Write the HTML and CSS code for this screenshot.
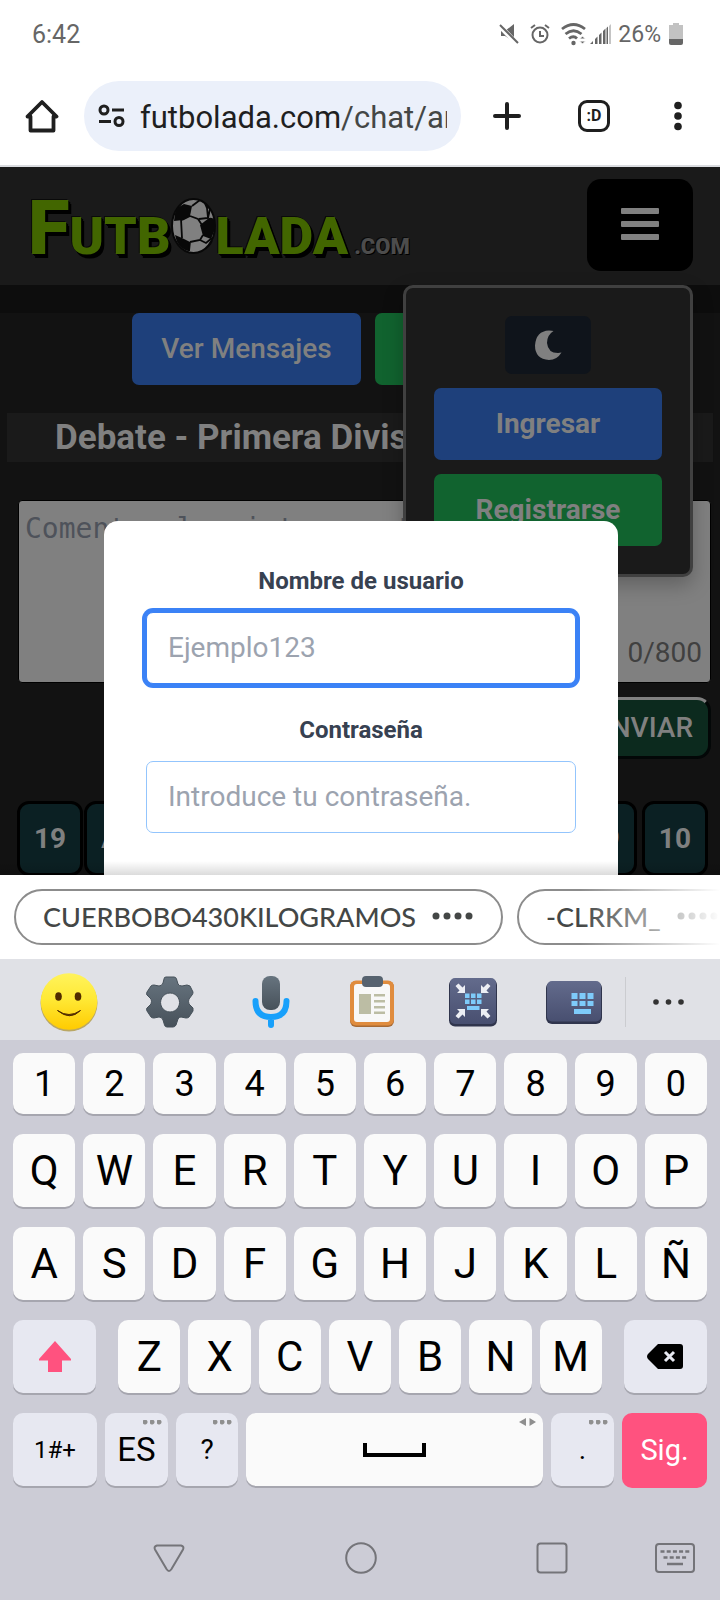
FILE: index.html
```html
<!DOCTYPE html>
<html lang="es">
<head>
<meta charset="utf-8">
<meta name="viewport" content="width=device-width, initial-scale=1">
<title>Futbolada</title>
<link rel="stylesheet" href="styles.css">
</head>
<body>
<div class="phone">
  <div class="status">
    <span class="clock">6:42</span>
    <div class="status-icons">
      <svg width="20" height="22" viewBox="0 0 20 22"><path d="M2 8h4l9-7v18l-9-6H2z" fill="#666"/><path d="M0 2l18 19" stroke="#fff" stroke-width="5"/><path d="M1 2l18 18" stroke="#666" stroke-width="2"/></svg>
      <svg class="alarm" width="20" height="22" viewBox="0 0 20 22" fill="none" stroke="#666" stroke-width="2"><circle cx="10" cy="12" r="7.5"/><path d="M10 8v5h4M1 5l4-3M19 5l-4-3"/></svg>
      <svg class="wifi" width="26" height="24" viewBox="0 0 26 24" fill="none" stroke="#666" stroke-width="2.8"><path d="M1 7q11.500-9 23 0M4.500 12q8-6.500 16 0M8 16.500q4.500-3.500 8 0"/><circle cx="12.500" cy="21" r="2.200" fill="#666" stroke="none"/><path d="M18.500 17l3-3 3 3zM18.500 19l3 3 3-3z" fill="#666" stroke="#fff" stroke-width="1"/></svg>
      <svg width="22" height="22" viewBox="0 0 22 22" fill="#666"><path d="M0 21l3-3v3zM5 21v-5l2.500-2.500V21zM9 21v-9l2.500-2.500V21zM13 21V8l2.500-2.500V21zM16.500 21V5L18 3.500V21z"/><path d="M19 21V3l2-2v20z" fill="#c4c4c4"/></svg>
      <span class="percent">26%</span>
      <svg class="battery" width="14" height="22" viewBox="0 0 14 22"><path d="M4 0h6v2h4v14H0V2h4z" fill="#c2c2c2"/><path d="M0 16h14v4q0 2-2 2H2q-2 0-2-2z" fill="#666"/></svg>
    </div>
  </div>

  <div class="browser">
    <button class="b-home" aria-label="Inicio"><svg width="34" height="34" viewBox="0 0 34 34" fill="none" stroke="#1f1f1f" stroke-width="3.800" stroke-linejoin="round"><path d="M2.500 17.500L17 3l14.500 14.500H28.500v14h-23v-14z"/></svg></button>
    <div class="url">
      <svg width="27" height="24" viewBox="0 0 27 24" fill="none" stroke="#1f1f1f" stroke-width="3"><circle cx="6" cy="6" r="4"/><path d="M14 6h12M1 17.500h12"/><circle cx="21" cy="17.500" r="4"/></svg>
      <span class="address">futbolada.com<span class="path">/chat/argentina</span></span>
    </div>
    <button class="b-new" aria-label="Nueva pestaña"><svg width="28" height="28" viewBox="0 0 28 28" stroke="#1f1f1f" stroke-width="4" stroke-linecap="round"><path d="M14 2v24M2 14h24"/></svg></button>
    <button class="b-tabs"><span class="tabs">:D</span></button>
    <button class="b-more" aria-label="Más"><svg width="8" height="30" viewBox="0 0 8 30" fill="#1f1f1f"><circle cx="4" cy="4.500" r="3.800"/><circle cx="4" cy="15" r="3.800"/><circle cx="4" cy="25.500" r="3.800"/></svg></button>
  </div>

  <div class="page">
    <header class="site-head">
      <a class="logo" href="#">
        <span class="logo-big">F</span><span class="logo-mid">UTB</span>
        <svg class="ball" width="45" height="56" viewBox="0 0 45 56"><ellipse cx="22.500" cy="28" rx="21.500" ry="27" fill="#808080" stroke="#080808" stroke-width="2"/><path d="M6 10l7-4 8 2-2 10-7 4-9 1q0-7 3-13z" fill="#080808"/><path d="M29 27l9-7q4-1 6 3v8l-4 10-8-3z" fill="#080808"/><path d="M4 37l7 3 8 4v9q-6 0-11-6-3-4-4-10z" fill="#080808"/><path d="M32 3l8 8-5-1zM34 52l5-7 3-2q-3 6-8 9z" fill="#080808"/><path d="M21 8l8-6M19 18l8 3 4 6M10 21l1 19M11 22l8-4M19 44l10-2 3-5M29 42l6 3 6-5M19 44l-1 9M28 21l9-1-1-10M37 20l2-9" fill="none" stroke="#080808" stroke-width="1.800"/></svg>
        <span class="logo-mid">LADA</span><span class="logo-com">.COM</span>
      </a>
      <button class="burger" aria-label="Menú"><svg width="38" height="33" viewBox="0 0 38 33" fill="#808080"><rect width="38" height="6" rx="1"/><rect y="13" width="38" height="6" rx="1"/><rect y="26" width="38" height="6" rx="1"/></svg></button>
      <nav class="panel">
        <button class="moon" aria-label="Modo oscuro"><svg width="27" height="30" viewBox="0 0 27 30"><path d="M18.500 1Q12 5 12 13q1 10 11 10l3.500-.5Q22 30 14 30 0 29 0 15.500 1 1 14 .5q3 0 4.500.5z" fill="#808080"/></svg></button>
        <button class="btn blue">Ingresar</button>
        <button class="btn green">Registrarse</button>
      </nav>
    </header>
    <div class="band"></div>
    <div class="actions">
      <button class="btn blue">Ver Mensajes</button>
      <button class="btn green second" aria-label="Chat"></button>
    </div>
    <h1 class="title">Debate - Primera División</h1>
    <form class="comment">
      <div class="field">
        <textarea class="box" aria-label="Comentario" placeholder="Comenta algo interesante"></textarea>
        <span class="count">0/800</span>
      </div>
      <button class="send" type="button">ENVIAR</button>
    </form>
    <div class="pager">
      <button class="pg">19</button>
      <button class="pg">Ant.</button>
      <button class="pg push">19</button>
      <button class="pg">10</button>
    </div>

    <div class="overlay">
      <form class="modal">
        <label class="lbl" for="user">Nombre de usuario</label>
        <input class="inp active" id="user" type="text" placeholder="Ejemplo123">
        <label class="lbl" for="pass">Contraseña</label>
        <input class="inp" id="pass" type="password" placeholder="Introduce tu contraseña.">
      </form>
    </div>
    <div class="shade"></div>
  </div>

  <div class="autofill">
    <button class="chip"><span>CUERBOBO430KILOGRAMOS</span><svg width="41" height="8" viewBox="0 0 41 8" fill="#444746"><circle cx="4" cy="4" r="3.500"/><circle cx="15" cy="4" r="3.500"/><circle cx="26" cy="4" r="3.500"/><circle cx="37" cy="4" r="3.500"/></svg></button>
    <button class="chip"><span>-CLRKM_</span><svg width="41" height="8" viewBox="0 0 41 8" fill="#444746"><circle cx="4" cy="4" r="3.500"/><circle cx="15" cy="4" r="3.500"/><circle cx="26" cy="4" r="3.500"/><circle cx="37" cy="4" r="3.500"/></svg></button>
  </div>

  <div class="tools">
    <button aria-label="Emoji"><svg width="60" height="60" viewBox="0 0 60 60"><defs><linearGradient id="y" x1="0" y1="0" x2="0" y2="1"><stop offset="0" stop-color="#fff35c"/><stop offset=".45" stop-color="#ffe936"/><stop offset="1" stop-color="#ffcb00"/></linearGradient><linearGradient id="g" x1="0" y1="0" x2="0" y2="1"><stop offset="0" stop-color="#67747f"/><stop offset="1" stop-color="#47515a"/></linearGradient><linearGradient id="n" x1="0" y1="0" x2="0" y2="1"><stop offset="0" stop-color="#636b8c"/><stop offset="1" stop-color="#484f70"/></linearGradient></defs><circle cx="30" cy="31" r="28.500" fill="#a98f2c" opacity=".7"/><circle cx="30" cy="29.500" r="28.300" fill="url(#y)"/><ellipse cx="19.500" cy="24.500" rx="3.300" ry="4.300" fill="#512b00"/><ellipse cx="39" cy="24.500" rx="3.300" ry="4.300" fill="#512b00"/><path d="M18.500 38.500q11.500 8 23 0-10.500 10.500-23 0z" fill="#512b00" stroke="#512b00"/></svg></button>
    <button aria-label="Ajustes"><svg width="48" height="52" viewBox="0 0 48 52"><path d="M20 1h8q2 0 2.500 2l1.500 5q1 2 4 2l5-1 3 1 3 6q0 2-1 3l-3 4q-1 2 0 5l4 4v3l-4 6q-1 1-3 1l-5-1q-2 0-3 2l-2 6q-1 2-3 2h-6q-2 0-2.500-2L17 44q-1-3-4-3l-5 1q-2 0-3-1l-4-6q-1-2 0-3l4-4q1-3 0-5l-4-4q-1-1 0-3l4-6q1-1 3-1l5 1q3 0 4-3l1-4q0-2 2-2zM24 17a9.500 9.500 0 1 0 .1 0z" fill="url(#g)" stroke="#46515a" fill-rule="evenodd"/></svg></button>
    <button aria-label="Voz"><svg width="38" height="52" viewBox="0 0 38 52"><rect x="10" y="0" width="18" height="34" rx="8" fill="url(#g)"/><path d="M3.500 25q0 16 15.500 16t15.500-16M19 41v8" fill="none" stroke="#18a0fb" stroke-width="6" stroke-linecap="round"/></svg></button>
    <button aria-label="Portapapeles"><svg width="44" height="52" viewBox="0 0 44 52"><rect y="5" width="44" height="46" rx="6" fill="#a86a34"/><rect y="4.500" width="44" height="45" rx="6" fill="#e08c3e"/><rect x="4" y="8" width="36" height="38" rx="3" fill="#f8f8f8"/><rect x="12" width="21" height="11" rx="4" fill="#56626f"/><path d="M9 18h12v20H9zM24 18h11v2.500H24zM24 24h11v2.500H24zM24 30h11v2.500H24zM24 35.500h11V38H24z" fill="#bcbda4"/></svg></button>
    <button aria-label="Contraer teclado"><svg width="48" height="50" viewBox="0 0 48 50"><rect y="2" width="48" height="47.500" rx="6" fill="#30354d"/><rect x="1" y="1" width="46" height="46" rx="5" fill="url(#n)"/><path d="M6.500 9l3-2.500 4 4L16 8v8H8l2.500-2.500zM41.500 9l-3-2.500-4 4L32 8v8h8l-2.500-2.500zM6.500 39l3 2.500 4-4L16 40v-8H8l2.500 2.500zM41.500 39l-3 2.500-4-4L32 40v-8h8l-2.500 2.500z" fill="#eceef4"/><path d="M16 16.500h4.500V21H16zM22 16.500h4.500V21H22zM28 16.500h4.500V21H28zM16 22.500h4.500V27H16zM22 22.500h4.500V27H22zM28 22.500h4.500V27H28zM18 29h12.500v4H18z" fill="#7ecbfa"/></svg></button>
    <button aria-label="Modo teclado"><svg width="56" height="46" viewBox="0 0 56 46"><rect y="3" width="56" height="42" rx="6" fill="#30354d"/><rect x="1" y="2" width="54" height="40.500" rx="5" fill="url(#n)"/><path d="M25.500 14h6v6h-6zM33.500 14h6v6h-6zM41.500 14h6v6h-6zM25.500 22h6v5h-6zM33.500 22h6v5h-6zM41.500 22h6v5h-6zM28 30h17v5H28z" fill="#7ecbfa"/></svg></button>
    <button class="tool-more" aria-label="Más opciones"><svg width="31" height="6" viewBox="0 0 31 6" fill="#333"><circle cx="3" cy="3" r="2.800"/><circle cx="15.500" cy="3" r="2.800"/><circle cx="28" cy="3" r="2.800"/></svg></button>
  </div>

  <div class="keys">
    <div class="row ten nums"><button>1</button><button>2</button><button>3</button><button>4</button><button>5</button><button>6</button><button>7</button><button>8</button><button>9</button><button>0</button></div>
    <div class="row ten"><button>Q</button><button>W</button><button>E</button><button>R</button><button>T</button><button>Y</button><button>U</button><button>I</button><button>O</button><button>P</button></div>
    <div class="row ten"><button>A</button><button>S</button><button>D</button><button>F</button><button>G</button><button>H</button><button>J</button><button>K</button><button>L</button><button>Ñ</button></div>
    <div class="row shift-row">
      <button class="fn" aria-label="Mayúsculas"><svg width="32" height="31" viewBox="0 0 32 31"><path d="M16 0l16 18v1.500h-9V31H9V19.500H0V18z" fill="#ff527f"/></svg></button>
      <div class="letters"><button>Z</button><button>X</button><button>C</button><button>V</button><button>B</button><button>N</button><button>M</button></div>
      <button class="fn" aria-label="Borrar"><svg width="36" height="25" viewBox="0 0 36 25"><path d="M11 0h22q3 0 3 3v19q0 3-3 3H11L1 15q-2-2.500 0-5z"/><path d="M18 8l9 9M27 8l-9 9" stroke="#e7e8f1" stroke-width="3"/></svg></button>
    </div>
    <div class="row space-row">
      <button class="fn small">1#+</button>
      <button class="fn lang">ES<i class="dots"></i></button>
      <button class="fn mark">?<i class="dots"></i></button>
      <button class="space" aria-label="Espacio"><svg width="63" height="14" viewBox="0 0 63 14"><path d="M2 0v12h59V0" fill="none" stroke="#000" stroke-width="4"/></svg><svg class="arrows" width="17" height="8" viewBox="0 0 17 8" fill="#8f8f8f"><path d="M0 4l7-4v8zM17 4l-6.500-4v8z"/></svg></button>
      <button class="fn mark">.<i class="dots"></i></button>
      <button class="next">Sig.</button>
    </div>
  </div>

  <nav class="sysnav">
    <button aria-label="Atrás"><svg width="32" height="29" viewBox="0 0 32 29"><path d="M4 1.500h24q3.500 1 2 4L18.500 25q-2.500 4-5 0L2 5.500q-1.500-3 2-4z"/></svg></button>
    <button aria-label="Principal"><svg width="32" height="32" viewBox="0 0 32 32"><circle cx="16" cy="16" r="14.800"/></svg></button>
    <button aria-label="Recientes"><svg width="32" height="32" viewBox="0 0 32 32"><rect x="1.500" y="1.500" width="29" height="29" rx="3"/></svg></button>
    <button aria-label="Teclado"><svg width="40" height="30" viewBox="0 0 40 30"><rect x="1" y="1" width="38" height="28" rx="3"/><path d="M5.500 8.500H35" stroke-dasharray="4 2.200" stroke-width="2.500"/><path d="M8.500 14.500H32" stroke-dasharray="4 2.200" stroke-width="2.500"/><path d="M12 21h16" stroke-width="2.500"/></svg></button>
  </nav>
</div>
</body>
</html>
```
FILE: styles.css
```css
* { box-sizing: border-box; }
body { margin: 0; font-family: Roboto, "Liberation Sans", sans-serif; background: #ccccd6; }
button { margin: 0; padding: 0; border: 0; background: none; font: inherit; color: inherit; display: flex; align-items: center; justify-content: center; }
svg { display: block; flex: none; }

.phone { min-height: 100vh; display: flex; flex-direction: column; overflow: hidden; }

.status { height: 68px; flex: none; display: flex; align-items: center; justify-content: space-between; padding: 0 37px 0 32px; background: #fff; color: #666; font-size: 25px; }
.status-icons { display: flex; align-items: center; gap: 6px; }
.alarm { margin: 0 5px; }
.wifi { margin-right: -3px; }
.percent { font-size: 23px; }
.battery { margin-left: 2px; }

.browser { flex: none; display: flex; align-items: center; padding: 13px 0 14px; background: #fff; border-bottom: 2px solid #dadce0; }
.b-home { width: 84px; }
.b-new { width: 92px; }
.b-tabs { width: 82px; }
.b-more { width: 85px; }
.url { flex: 1; min-width: 0; height: 70px; display: flex; align-items: center; gap: 15px; padding: 0 14px; border-radius: 35px; background: #ebf0fa; }
.address { flex: 1; overflow: hidden; white-space: nowrap; padding-top: 2px; font-size: 31px; color: #1f1f1f; }
.path { color: #444746; }
.tabs { width: 32px; height: 32px; border: 3px solid #1f1f1f; border-radius: 9px; font: bold 16px/25px Roboto, sans-serif; color: #1f1f1f; text-align: center; }

.page { position: relative; flex: 1 1 0; overflow: hidden; background: #121212; color: #808080; }
.site-head { position: relative; z-index: 1; display: flex; align-items: center; justify-content: space-between; padding: 12px 27px 14px 28px; background: #1a1a1a; }
.logo { display: flex; align-items: baseline; padding-top: 6px; text-decoration: none; color: #426600; font-weight: 900; text-shadow: 1px 1px 0 #000, 2px 2px 0 #000, 3px 4px 0 #000, -1px -1px 0 #0a0a0a; }
.logo-big { font-size: 76px; line-height: 76px; }
.logo-mid { font-size: 52px; line-height: 52px; }
.logo-com { padding-left: 6px; font-size: 22px; line-height: 24px; color: #4c4c4c; text-shadow: 1px 1px 0 #000, -1px -1px 0 #0a0a0a; }
.ball { margin-bottom: -8px; }
.burger { width: 106px; height: 92px; padding-bottom: 2px; border-radius: 14px; background: #000; }
.panel { position: absolute; top: 100%; right: 27px; width: 290px; padding: 28px; display: flex; flex-direction: column; gap: 14px; border: 3px solid #404040; border-radius: 10px; background: #1a1a1a; box-shadow: 0 8px 20px rgba(0, 0, 0, .25); }
.moon { width: 86px; height: 58px; align-self: center; border-radius: 7px; background: #0f141b; }
.btn { height: 72px; padding: 0 29px 2px; border-radius: 7px; font-size: 28px; font-weight: bold; }
.actions .btn { font-weight: 500; }
.blue { background: #1e407b; }
.green { background: #11632f; }
.band { height: 28px; background: #0d0d0d; }
.actions { display: flex; justify-content: center; gap: 14px; }
.second { width: 213px; }
.title { margin: 28px 7px 0; padding: 0 48px; background: #1a1a1a; font-size: 35px; line-height: 49px; font-weight: bold; white-space: nowrap; overflow: hidden; }
.comment { margin: 27px 0 0; padding: 11px 9px 14px 18px; }
.field { position: relative; }
.box { display: block; width: 100%; height: 183px; padding: 8px 6px; border: 1px solid #000; border-radius: 4px; background: #808080; resize: none; outline: 0; font: 28px/40px "DejaVu Sans Mono", monospace; }
.box::placeholder { color: #4e525a; }
.count { position: absolute; right: 9px; bottom: 14px; font-size: 28px; line-height: 32px; color: #404040; }
.send { width: 134px; height: 62px; margin: 14px 0 0 auto; padding-bottom: 2px; border: 3px solid #030707; border-top-color: #808080; border-radius: 14px; background: #0c2a1e; font-size: 28px; font-weight: 500; }
.pager { display: flex; gap: 1px; margin-top: 28px; padding: 0 12px 0 17px; }
.pg { min-width: 66px; height: 75px; padding: 0 14px; border: 3px solid #000; border-radius: 12px; background: #0b2023; font-size: 28px; font-weight: bold; }
.push { margin: 0 4px 0 auto; }

.overlay { position: absolute; z-index: 2; inset: 0; display: flex; justify-content: center; align-items: flex-start; padding: 354px 0 0 2px; }
.modal { width: 514px; max-width: 90%; padding: 42px 42px 64px; border-radius: 14px; background: #fff; display: flex; flex-direction: column; }
.lbl { margin-bottom: 13px; font-size: 24px; line-height: 36px; font-weight: bold; color: #374151; text-align: center; }
.inp { width: 100%; height: 72px; margin-bottom: 28px; padding: 0 21px 2px; border: 1px solid #93c5fd; border-radius: 7px; background: #fff; outline: 0; font: 28px Roboto, sans-serif; color: #374151; }
.inp::placeholder { color: #9ca3af; opacity: 1; }
.active { border-color: #3b82f6; box-shadow: 0 0 0 4px #3b82f6; }
.shade { position: absolute; z-index: 3; left: 0; right: 0; bottom: 0; height: 14px; background: linear-gradient(transparent, rgba(0, 0, 0, .14)); }

.autofill { position: relative; flex: none; display: flex; gap: 14px; padding: 14px 0 14px 14px; background: #fff; overflow: hidden; }
.autofill::after { content: ""; position: absolute; top: 0; right: 0; bottom: 0; width: 140px; background: linear-gradient(90deg, rgba(255, 255, 255, 0), #fff); }
.chip { flex: none; height: 56px; gap: 16px; padding: 0 28px 2px 27px; border: 2px solid #8c8c8c; border-radius: 28px; font: 500 27px Lato, sans-serif; color: #444746; }

.tools { flex: none; height: 81px; display: grid; grid-template-columns: repeat(6, 101fr) 86fr; align-items: center; padding: 5px 9px 0 18px; background: #e0e1e6; }
.tool-more { height: 50px; border-left: 1px solid #cbccd0; }

.keys { flex: none; display: grid; gap: 20px; padding: 13px 13px 0; font-size: 42px; color: #000; }
.row { display: grid; gap: 8px; }
.row button { position: relative; height: 73px; border-radius: 10px; background: #fafafa; box-shadow: 0 2px 0 #a6a6af; }
.ten { grid-template-columns: repeat(10, 1fr); }
.nums { font-size: 36px; }
.nums button { height: 61px; }
.shift-row { grid-template-columns: 83fr 482fr 83fr; gap: 22px; }
.letters { display: grid; grid-template-columns: repeat(7, 1fr); gap: 8px; }
.space-row { grid-template-columns: 84fr 63fr 62fr 297fr 63fr 85fr; }
.row .fn { background: #e7e8f1; }
.small { font-size: 24px; }
.lang { font-size: 33px; }
.mark { font-size: 28px; }
.dots { position: absolute; top: 7px; right: 6px; width: 19px; height: 5px; background: radial-gradient(circle at 2px 2px, #8f8f8f 2px, transparent 3px) 0 0 / 7px 5px; }
.arrows { position: absolute; top: 5px; right: 7px; }
.row .next { background: #ff527f; box-shadow: 0 2px 0 #ff527f; color: #fff; font-size: 29px; }

.sysnav { flex: none; display: grid; grid-template-columns: 192fr 190fr 191fr 55fr; padding: 56px 17px 26px 73px; }
.sysnav button { height: 32px; }
.sysnav svg { fill: none; stroke: #747479; stroke-width: 2; }
```
